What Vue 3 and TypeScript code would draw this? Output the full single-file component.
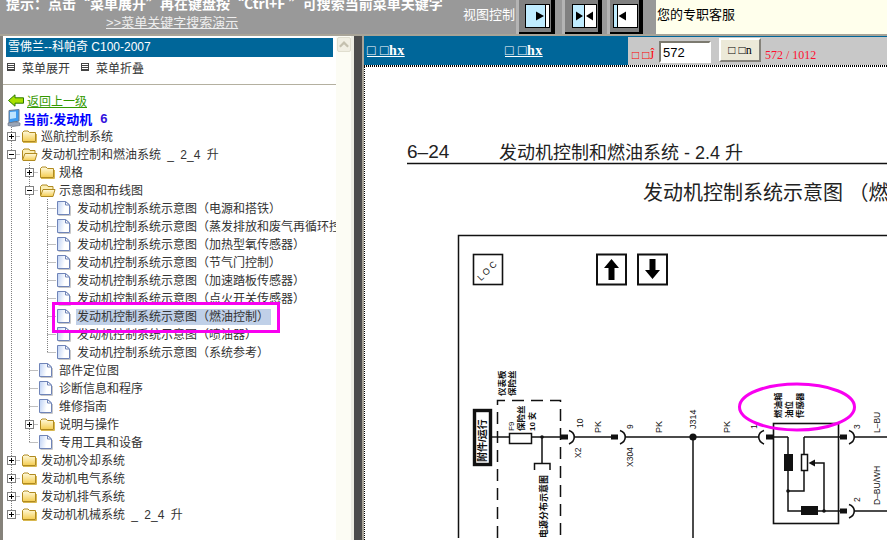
<template>
  <div class="page">
    <svg class="defs" width="0" height="0">
      <defs>
        <linearGradient id="folderFill" x1="0" y1="0" x2="0" y2="1">
          <stop offset="0" stop-color="#fffbe0" />
          <stop offset="1" stop-color="#f4cc50" />
        </linearGradient>
        <linearGradient id="docFill" x1="0" y1="0" x2="1" y2="0.2">
          <stop offset="0" stop-color="#bcd0f4" />
          <stop offset="0.7" stop-color="#ffffff" />
        </linearGradient>
      </defs>
    </svg>
    <header class="top">
      <div class="tip">
        <div class="tip-line">提示：点击“菜单展开”再在键盘按“Ctrl+F ”可搜索当前菜单关键字</div>
        <a class="demo-link">&gt;&gt;菜单关键字搜索演示</a>
      </div>
      <span class="view-label">视图控制</span>
      <div class="view-btns">
        <div v-for="(b, i) in viewButtons" :key="i" class="view-btn" :class="b.cls">
          <svg width="25" height="24" viewBox="0 0 25 24">
            <rect x="0.5" y="0.5" width="24" height="23" fill="#fff" />
            <rect x="0.5" y="0.5" :width="b.cyan" height="23" fill="#c0ecff" />
            <path :d="`M${b.line} 0V24`" stroke="#000" stroke-width="1" />
            <rect x="0.5" y="0.5" width="24" height="23" fill="none" stroke="#000" />
            <path v-for="(a, j) in b.arrows" :key="j" :d="a" fill="#000" />
          </svg>
        </div>
      </div>
      <div class="service">您的专职客服</div>
    </header>

    <div class="body">
      <aside class="nav">
        <div class="tree-pane">
          <div class="brand">雪佛兰--科帕奇 C100-2007</div>
          <div class="menu-row">
            <span class="menu-item"><i class="menu-ico"></i>菜单展开</span>
            <span class="menu-item"><i class="menu-ico"></i>菜单折叠</span>
          </div>
          <div class="rule"></div>
          <div class="back-row">
            <svg width="16" height="13" viewBox="0 0 16 13">
              <path d="M0.5 6.5L7 0.8V3.8H15.5V9.2H7V12.2Z" fill="#a8e000" stroke="#2c7a00" />
            </svg>
            <a class="back-link">返回上一级</a>
          </div>
          <div class="current-row">
            <svg width="14" height="18" viewBox="0 0 14 18">
              <path d="M2 1.5L12 0.5V12L2 14Z" fill="#3f9cf0" stroke="#6c7a90" />
              <path d="M3 3L9 2.4V9L3 10Z" fill="#bfe4ff" />
              <path d="M1 14L8 12.8L13 14V16.5L6 17.5L1 16.5Z" fill="#9aa6b8" stroke="#5e6a7c" stroke-width="0.6" />
            </svg>
            <span class="current-text">当前:发动机</span>
            <span class="current-num">6</span>
          </div>
          <div class="tree">
            <div v-for="(row, i) in rows" :key="i" class="row">
              <svg v-for="(g, k) in row.guides" :key="k" class="cell" width="18" height="18" viewBox="0 0 18 18">
                <path v-if="g" d="M9.5 0V18" class="dots" />
              </svg>
              <svg class="cell" width="18" height="18" viewBox="0 0 18 18">
                <path :d="row.last ? 'M9.5 0V9' : 'M9.5 0V18'" class="dots" />
                <path d="M9.5 9.5H18" class="dots" />
                <template v-if="row.toggle">
                  <rect x="5.5" y="5.5" width="8" height="8" fill="#fff" stroke="#808080" />
                  <path d="M7 9.5H12" stroke="#000" />
                  <path v-if="row.toggle === 'plus'" d="M9.5 7V12" stroke="#000" />
                </template>
              </svg>
              <svg class="cell" width="18" height="18" viewBox="0 0 18 18">
                <template v-if="row.icon === 'doc'">
                  <path d="M14.5 7V16.5H2.5" fill="none" stroke="#c8c8c8" />
                  <path d="M1.5 2.5H9.5L13.5 6V15.5H1.5Z" fill="url(#docFill)" stroke="#6f84b8" />
                  <path d="M9.5 2.5V6H13.5Z" fill="#fff" stroke="#6f84b8" />
                </template>
                <template v-else-if="row.icon === 'open'">
                  <path d="M2.5 14.5V5.5L4 4H9L10 5.5H15V8" fill="#fbeeb4" stroke="#b08a20" />
                  <path d="M2.5 15L5 8.5H17L15 15.5H3Z" fill="url(#folderFill)" stroke="#b08a20" />
                </template>
                <template v-else>
                  <path d="M3 15.5H16.5V7" fill="none" stroke="#d8b850" />
                  <path d="M2.5 14.5V5.5L4 4H8L9.5 5.5H15.5V14.5Z" fill="url(#folderFill)" stroke="#b08a20" />
                </template>
              </svg>
              <span class="label" :class="{ active: row.active }">{{ row.text }}</span>
            </div>
          </div>
        </div>
        <div class="scrollbar">
          <div class="scroll-up">
            <svg width="13" height="9" viewBox="0 0 13 9"><path d="M2 7L6.5 2.5L11 7" fill="none" stroke="#c4c0ae" stroke-width="2.4" /></svg>
          </div>
        </div>
      </aside>
      <div class="splitter"></div>

      <main class="viewer">
        <div class="toolbar">
          <div class="links">
            <a class="tool-link">□ □hx</a>
            <a class="tool-link">□ □hx</a>
          </div>
          <div class="pager">
            <span class="pager-label">□ □Ĵ</span>
            <input class="page-input" value="572" />
            <button class="go-btn">□ □n</button>
            <span class="page-count">572 / 1012</span>
          </div>
        </div>
        <div class="sheet">
          <svg class="drawing" width="523" height="473" viewBox="364 67 523 473">
            <text x="407" y="160" class="h1">6–24</text>
            <text x="499" y="161" class="h1 cjk">发动机控制和燃油系统 - 2.4 升</text>
            <path d="M407 165.5H887" stroke="#111" stroke-width="1.5" />
            <text x="643" y="202" class="h2">发动机控制系统示意图 （燃油控制）</text>

            <path d="M887 237.5H458.5V540" fill="none" stroke="#111" stroke-width="1.5" />

            <rect x="473.5" y="256.5" width="29" height="30" fill="#fff" stroke="#111" stroke-width="1.6" />
            <text transform="rotate(-45 487 273)" x="487" y="276" class="loc">L O C</text>
            <rect x="597" y="256.5" width="29" height="30" fill="#fff" stroke="#111" stroke-width="2" />
            <path d="M611.5 261L619 270H614.5V282H608.5V270H604Z" fill="#000" />
            <rect x="638" y="256.5" width="29" height="30" fill="#fff" stroke="#111" stroke-width="2" />
            <path d="M652.5 281L645 272H649.5V261H655.5V272H660Z" fill="#000" />

            <rect x="474.5" y="412.5" width="16" height="54" fill="#fff" stroke="#111" stroke-width="3.4" />
            <path d="M492 439H497" stroke="#111" stroke-width="1.4" />

            <path d="M497.5 540V402.5H560.5V540" fill="none" stroke="#111" stroke-width="1.5" stroke-dasharray="12 7" />
            <path d="M497 439H509M532 439H560M575 439H611M626 439H759M774 439H788M804 439H840M854 439H887M854 513H887M693 439V540" stroke="#111" stroke-width="1.5" fill="none" />
            <rect x="509.5" y="435.5" width="22" height="10" fill="#fff" stroke="#111" stroke-width="1.5" />
            <circle cx="542" cy="439" r="1.8" fill="#111" />
            <path d="M542 439V465M534.5 472V465.5H550V472" fill="none" stroke="#111" stroke-width="1.5" />

            <path d="M560 439H568M611 439H618M766 439H774M840 439H847M840 513H847" stroke="#111" stroke-width="5" />
            <path d="M569 432.5C576 435 576 443 569 446M620 432.5C627 435 627 443 620 446M764 432.5C757 435 757 443 764 446M849 432.5C856 435 856 443 849 446M849 506.5C856 509 856 517 849 520" fill="none" stroke="#111" stroke-width="1.6" />
            <circle cx="693" cy="439" r="3.6" fill="#111" />

            <rect x="773.5" y="425.5" width="65" height="100" fill="none" stroke="#111" stroke-width="1.6" />
            <path d="M788 439V513H840M804 439V493H788" fill="none" stroke="#111" stroke-width="1.5" />
            <rect x="784" y="456" width="9" height="17" fill="#111" />
            <rect x="801.5" y="456.5" width="6" height="16" fill="#fff" stroke="#111" stroke-width="1.5" />
            <path d="M808.5 465L815 461.5V468.5Z" fill="#111" />
            <path d="M814 465H824V513" fill="none" stroke="#111" stroke-width="1.5" />
            <rect x="801" y="508" width="17" height="9" fill="#111" />
            <circle cx="788" cy="493" r="1.8" fill="#111" />
            <circle cx="824" cy="513" r="1.8" fill="#111" />

            <text
              v-for="(t, i) in labels"
              :key="i"
              :x="t.x"
              :y="t.y"
              :transform="`rotate(-90 ${t.x} ${t.y})`"
              class="wire-label"
              :class="{ heavy: t.heavy }"
              :style="{ fontSize: t.size + 'px' }"
            >{{ t.text }}</text>

            <ellipse cx="797" cy="409" rx="57.5" ry="23" fill="none" stroke="#f800f0" stroke-width="3" />
          </svg>
        </div>
      </main>

      <div class="marker"></div>
    </div>
  </div>
</template>

<script setup lang="ts">
type Row = {
  guides: boolean[]
  text: string
  icon: 'doc' | 'open' | 'folder'
  toggle?: 'plus' | 'minus'
  last?: boolean
  active?: boolean
}

const viewButtons = [
  { cls: 'b1', cyan: 20, line: 20.5, arrows: ['M11 7.5L19 12L11 16.5Z'] },
  { cls: 'b2', cyan: 12, line: 12.5, arrows: ['M4 7.5L11 12L4 16.5Z', 'M21 7.5L14 12L21 16.5Z'] },
  { cls: 'b3', cyan: 4, line: 4.5, arrows: ['M13 7.5L5.5 12L13 16.5Z'] },
]

const doc = '发动机控制系统示意图'
const rows: Row[] = [
  { guides: [], text: '巡航控制系统', icon: 'folder', toggle: 'plus' },
  { guides: [], text: '发动机控制和燃油系统 _ 2_4 升', icon: 'open', toggle: 'minus' },
  { guides: [true], text: '规格', icon: 'folder', toggle: 'plus' },
  { guides: [true], text: '示意图和布线图', icon: 'open', toggle: 'minus' },
  { guides: [true, true], text: doc + '（电源和搭铁）', icon: 'doc' },
  { guides: [true, true], text: doc + '（蒸发排放和废气再循环控制）', icon: 'doc' },
  { guides: [true, true], text: doc + '（加热型氧传感器）', icon: 'doc' },
  { guides: [true, true], text: doc + '（节气门控制）', icon: 'doc' },
  { guides: [true, true], text: doc + '（加速踏板传感器）', icon: 'doc' },
  { guides: [true, true], text: doc + '（点火开关传感器）', icon: 'doc' },
  { guides: [true, true], text: doc + '（燃油控制）', icon: 'doc', active: true },
  { guides: [true, true], text: doc + '（喷油器）', icon: 'doc' },
  { guides: [true, true], text: doc + '（系统参考）', icon: 'doc', last: true },
  { guides: [true], text: '部件定位图', icon: 'doc' },
  { guides: [true], text: '诊断信息和程序', icon: 'doc' },
  { guides: [true], text: '维修指南', icon: 'doc' },
  { guides: [true], text: '说明与操作', icon: 'folder', toggle: 'plus' },
  { guides: [true], text: '专用工具和设备', icon: 'doc', last: true },
  { guides: [], text: '发动机冷却系统', icon: 'folder', toggle: 'plus' },
  { guides: [], text: '发动机电气系统', icon: 'folder', toggle: 'plus' },
  { guides: [], text: '发动机排气系统', icon: 'folder', toggle: 'plus' },
  { guides: [], text: '发动机机械系统 _ 2_4 升', icon: 'folder', toggle: 'plus', last: true },
]

// rotated text on the wiring diagram: x/y is where the string starts
const labels = [
  { x: 486, y: 464, text: '附件/运行', size: 10, heavy: true },
  { x: 505, y: 398, text: '仪表板', size: 8.5, heavy: true },
  { x: 515, y: 398, text: '保险丝', size: 8.5, heavy: true },
  { x: 514, y: 433, text: 'F9', size: 8 },
  { x: 524, y: 433, text: '保险丝', size: 8.5, heavy: true },
  { x: 535, y: 433, text: '10 安', size: 8, heavy: true },
  { x: 547, y: 540, text: '电源分布示意图', size: 9, heavy: true },
  { x: 583, y: 430, text: '10', size: 8.5 },
  { x: 581, y: 460, text: 'X2', size: 8.5 },
  { x: 601, y: 435, text: 'PK', size: 9 },
  { x: 633, y: 431, text: '9', size: 8.5 },
  { x: 633, y: 469, text: 'X304', size: 8.5 },
  { x: 662, y: 435, text: 'PK', size: 9 },
  { x: 696, y: 431, text: 'J314', size: 9 },
  { x: 730, y: 435, text: 'PK', size: 9 },
  { x: 757, y: 431, text: '1', size: 8.5 },
  { x: 781, y: 420, text: '燃油箱', size: 8.5, heavy: true },
  { x: 792, y: 420, text: '油位', size: 8.5, heavy: true },
  { x: 803, y: 420, text: '传感器', size: 8.5, heavy: true },
  { x: 860, y: 431, text: '3', size: 8.5 },
  { x: 880, y: 435, text: 'L–BU', size: 8.5 },
  { x: 860, y: 504, text: '2', size: 8.5 },
  { x: 880, y: 507, text: 'D–BU/WH', size: 8.5 },
]
</script>

<style scoped>
.page {
  position: relative;
  display: flex;
  flex-direction: column;
  width: 887px;
  height: 540px;
  overflow: hidden;
  background: #fff;
  font-family: "Liberation Sans", "Noto Sans CJK SC", sans-serif;
  font-size: 12px;
  color: #333;
}
.defs {
  position: absolute;
}

.top {
  display: flex;
  flex: none;
  height: 34px;
  background: #999;
}
.tip {
  flex: none;
  width: 463px;
  overflow: hidden;
  color: #fff;
}
.tip-line {
  margin: -7px 0 0 6px;
  font-family: "Noto Sans CJK SC", sans-serif;
  font-size: 14px;
  font-weight: bold;
  line-height: 20px;
  white-space: nowrap;
}
.demo-link {
  display: block;
  margin: 0 0 0 106px;
  font-size: 13px;
  line-height: 19px;
  color: #eee;
  text-decoration: underline;
}
.view-label {
  flex: none;
  width: 53px;
  font-size: 13px;
  line-height: 29px;
  color: #fff;
}
.view-btns {
  display: flex;
  flex: none;
  width: 140px;
}
.view-btn {
  box-sizing: border-box;
  height: 34px;
  padding-top: 4px;
  background: #808080;
  border-left: 3px solid #b4b4b4;
  border-right: 4px solid #000;
  box-shadow: inset 0 -2px 0 #000;
}
.b1 {
  width: 39px;
  padding-left: 6px;
}
.b2 {
  width: 40px;
  margin-left: 7px;
  padding-left: 7px;
}
.b3 {
  width: 36px;
  margin-left: 5px;
  padding-left: 3px;
}
.view-btn svg {
  display: block;
}
.service {
  flex: 1;
  padding-left: 1px;
  background: #ffffec;
  font-size: 13px;
  line-height: 29px;
  color: #000;
}

.body {
  display: flex;
  flex: 1;
  min-height: 0;
  border-top: 2px solid #a8a498;
}

.nav {
  display: flex;
  flex: none;
  box-sizing: border-box;
  width: 354px;
  border-left: 3px solid #85827a;
}
.tree-pane {
  flex: none;
  width: 333px;
  overflow: hidden;
}
.brand {
  height: 19px;
  margin: 2px 3px 0;
  padding-left: 2px;
  background: #006699;
  font-size: 12px;
  line-height: 19px;
  color: #fff;
  white-space: nowrap;
}
.menu-row {
  display: flex;
  gap: 11px;
  height: 20px;
  padding-left: 4px;
  align-items: center;
}
.menu-item {
  display: flex;
  align-items: center;
}
.menu-ico {
  box-sizing: border-box;
  width: 8px;
  height: 8px;
  margin-right: 7px;
  border: 1px solid #444;
  background: repeating-linear-gradient(#fff 0 1px, #444 1px 2px);
}
.rule {
  height: 1px;
  margin-top: 7px;
  background: #b4b0a0;
}
.back-row {
  display: flex;
  align-items: center;
  height: 18px;
  margin-top: 6px;
  padding-left: 5px;
}
.back-link {
  margin-left: 3px;
  color: #339900;
  text-decoration: underline;
}
.current-row {
  display: flex;
  align-items: center;
  height: 18px;
  padding-left: 4px;
}
.current-text {
  margin-left: 2px;
  font-size: 13px;
  font-weight: bold;
  color: #0000ff;
}
.current-num {
  margin-left: 8px;
  font-size: 13px;
  font-weight: bold;
  color: #3311dd;
}

.tree {
  margin-left: -1px;
}
.row {
  display: flex;
  height: 18px;
  align-items: center;
  white-space: nowrap;
}
.cell {
  display: block;
  flex: none;
}
.dots {
  fill: none;
  stroke: #808080;
  stroke-dasharray: 1 1;
}
.label {
  margin-top: 2px;
  margin-left: 3px;
  word-spacing: 3px;
  line-height: 16px;
}
.label.active {
  margin-left: 2px;
  padding: 0 2px 0 1px;
  background: #c0d0e8;
}

.scrollbar {
  flex: none;
  width: 15px;
  background: #fcfcf4;
  border-right: 3px solid #eeeee4;
}
.scroll-up {
  display: flex;
  align-items: center;
  justify-content: center;
  box-sizing: border-box;
  height: 15px;
  margin: 1px 0 0 1px;
  background: #f0eee2;
  border: 1px solid #e0decf;
  border-radius: 2px;
}

.splitter {
  flex: none;
  width: 8px;
  background: #4c4c4c;
  border-right: 2px solid #a8a498;
}

.viewer {
  display: flex;
  flex: 1;
  flex-direction: column;
  min-width: 0;
}
.toolbar {
  display: flex;
  flex: none;
  height: 29px;
  background: #006699;
  font-family: "Liberation Serif", serif;
}
.links {
  display: flex;
  flex: none;
  width: 264px;
  padding-left: 3px;
  box-sizing: border-box;
}
.tool-link {
  flex: none;
  width: 138px;
  font-size: 14px;
  font-weight: bold;
  letter-spacing: 0.5px;
  line-height: 29px;
  color: #fff;
  text-decoration: underline;
}
.pager {
  display: flex;
  flex: 1;
  align-items: flex-start;
  margin-top: 1px;
  background: #c8c8c8;
}
.pager-label {
  width: 31px;
  padding-left: 4px;
  box-sizing: border-box;
  font-size: 12px;
  line-height: 36px;
  height: 28px;
  white-space: nowrap;
  overflow: hidden;
  color: #ff0000;
}
.page-input {
  box-sizing: border-box;
  width: 52px;
  height: 22px;
  margin-top: 4px;
  padding: 0 2px;
  border: 2px solid;
  border-color: #7c7a70 #fff #fff #7c7a70;
  background: #fff;
  font-family: "Liberation Sans", sans-serif;
  font-size: 13px;
  color: #000;
}
.go-btn {
  box-sizing: border-box;
  width: 42px;
  height: 24px;
  margin: 1px 0 0 8px;
  padding: 0;
  border: 2px solid;
  border-color: #fff #85827a #85827a #fff;
  background: #ece9d8;
  font-family: "Liberation Serif", serif;
  font-size: 12px;
  color: #000;
}
.page-count {
  margin-left: 4px;
  font-size: 12px;
  line-height: 36px;
  height: 28px;
  color: #ff1030;
}
.sheet {
  flex: 1;
  min-height: 0;
  overflow: hidden;
  background:
    repeating-linear-gradient(90deg, #000 0 1px, #fff 1px 2px) 0 0 / 100% 2px no-repeat,
    repeating-linear-gradient(#000 0 1px, #fff 1px 2px) 0 0 / 1px 100% no-repeat,
    #fff;
}
.drawing {
  display: block;
}
.h1 {
  font-size: 19px;
  fill: #222;
}
.h1.cjk {
  font-size: 18px;
}
.h2 {
  font-size: 20px;
  fill: #222;
}
.loc {
  font-size: 9px;
  text-anchor: middle;
  fill: #222;
}
.wire-label {
  fill: #111;
}
.wire-label.heavy {
  font-weight: bold;
}

.marker {
  position: absolute;
  left: 52px;
  top: 302px;
  box-sizing: border-box;
  width: 228px;
  height: 31px;
  border: 3px solid #f800f0;
}
</style>
